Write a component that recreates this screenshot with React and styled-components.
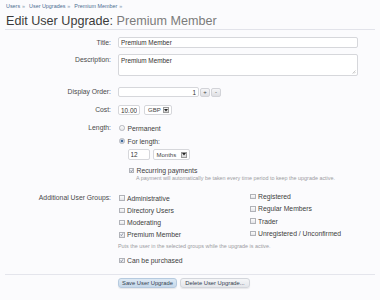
import React from "react";
import styled, { createGlobalStyle } from "styled-components";

const GlobalStyle = createGlobalStyle`
  html, body { margin: 0; padding: 0; background: #fbfbfd; }
  body {
    width: 380px; height: 300px; overflow: hidden;
    font-family: "Liberation Sans", Arial, sans-serif; color: #3a3a3a;
  }
  * { box-sizing: border-box; }
`;

const Page = styled.div`
  padding: 0 5px;
`;

const Breadcrumb = styled.div`
  margin-top: 2px;
  height: 8px;
  line-height: 8px;
  font-size: 5.4px;
  color: #4d6d91;
  padding-left: 1px;
  display: flex;
  gap: 4px;
`;

const Crumb = styled.span`
  &::after { content: "»"; margin-left: 2px; color: #8a9bb0; }
`;

const Heading = styled.h1`
  margin: 4px 0 0;
  padding: 0 0 0 1px;
  line-height: 15px;
  height: 16px;
  font-size: 12.6px;
  font-weight: normal;
  color: #3b3b3b;
  border-bottom: 1px solid #e2e3ea;
`;

const HeadingSub = styled.span`
  color: #7b7b7b;
`;

const Row = styled.div`
  display: grid;
  grid-template-columns: 106px 1fr;
  column-gap: 7px;
  align-items: start;
  margin-top: ${(p) => p.$mt || 0}px;
`;

const Label = styled.div`
  text-align: right;
  font-size: 6.8px;
  line-height: ${(p) => p.$lh || 10}px;
  color: #4a4a4a;
`;

const Controls = styled.div`
  display: flex;
  flex-direction: column;
  align-items: flex-start;
`;

const TextInput = styled.input`
  display: block;
  width: ${(p) => p.$w}px;
  height: ${(p) => p.$h || 10}px;
  margin: 0;
  padding: 0 2px;
  border: 1px solid #d6d7db;
  border-radius: 2px;
  background: #fff;
  font-family: "Liberation Sans", Arial, sans-serif;
  font-size: 6.4px;
  color: #333;
  text-align: ${(p) => (p.$right ? "right" : "left")};
  outline: none;
`;

const AreaWrap = styled.div`
  position: relative;
  width: 240px;
  height: 22px;
`;

const TextArea = styled.textarea`
  display: block;
  width: 240px;
  height: 22px;
  margin: 0;
  padding: 2px 2px;
  border: 1px solid #d6d7db;
  border-radius: 2px;
  background: #fff;
  font-family: "Liberation Sans", Arial, sans-serif;
  font-size: 6.4px;
  line-height: 8px;
  color: #333;
  resize: none;
  outline: none;
`;

const Grip = styled.svg`
  position: absolute;
  right: 2px;
  bottom: 2px;
`;

const Inline = styled.div`
  display: flex;
  align-items: center;
  gap: ${(p) => p.$gap || 0}px;
  margin-top: ${(p) => p.$mt || 0}px;
  margin-left: ${(p) => p.$ml || 0}px;
`;

const SpinButton = styled.span`
  display: flex;
  align-items: center;
  justify-content: center;
  width: 10px;
  height: 9px;
  border: 1px solid #d2d3d8;
  border-radius: 2px;
  background: linear-gradient(#f6f6f8, #dedfe3);
  font-size: 6px;
  color: #444;
`;

const Select = styled.div`
  display: flex;
  align-items: center;
  justify-content: space-between;
  width: ${(p) => p.$w}px;
  height: ${(p) => p.$h || 10}px;
  padding: 0 2px 0 3px;
  border: 1px solid #d6d7db;
  border-radius: 2px;
  background: #fff;
  font-size: 6px;
  color: #444;
`;

const ArrowBox = styled.span`
  display: flex;
  align-items: center;
  justify-content: center;
  width: 6px;
  height: 6px;
  border: 1px solid #9a9a9a;
  background: linear-gradient(#f4f4f4, #d8d8d8);
`;

const Option = styled.label`
  display: flex;
  align-items: center;
  height: ${(p) => p.$h || 10}px;
  margin-top: ${(p) => p.$mt || 0}px;
  font-size: 6.8px;
  color: #3e3e3e;
  white-space: nowrap;
`;

const Radio = styled.span`
  display: inline-block;
  width: 5.5px;
  height: 5.5px;
  margin-left: 1px;
  margin-right: 3px;
  border-radius: 50%;
  border: 1px solid #b4b7be;
  background: ${(p) =>
    p.$checked
      ? "radial-gradient(circle, #3f6a9a 0 1.4px, #cfd9e6 1.6px)"
      : "linear-gradient(#fdfdfd, #e4e5e8)"};
`;

const Box = styled.span`
  display: inline-flex;
  align-items: center;
  justify-content: center;
  width: 5.5px;
  height: 5.5px;
  margin-left: 1px;
  margin-right: 2.5px;
  border: 1px solid #b0b2b8;
  background: linear-gradient(#fdfdfd, #e3e4e8);
`;

const Hint = styled.div`
  font-size: 5.4px;
  line-height: 6px;
  color: #9c9ca2;
  margin-top: ${(p) => p.$mt || 0}px;
  margin-left: ${(p) => p.$ml || 0}px;
  white-space: nowrap;
`;

const Columns = styled.div`
  display: grid;
  grid-template-columns: 131px 1fr;
`;

const Column = styled.div`
  display: flex;
  flex-direction: column;
  gap: 2.3px;
  margin-top: ${(p) => p.$mt || 0}px;
`;

const Divider = styled.div`
  margin-top: ${(p) => p.$mt || 0}px;
  border-top: 1px solid #e4e5ec;
`;

const ButtonBar = styled.div`
  display: flex;
  gap: 3px;
  margin-top: 3.5px;
  padding-left: 113px;
`;

const Button = styled.span`
  display: flex;
  align-items: center;
  justify-content: center;
  height: 10px;
  width: ${(p) => p.$w}px;
  border-radius: 3px;
  border: 1px solid ${(p) => (p.$primary ? "#b6cadf" : "#d3d6dc")};
  background: ${(p) =>
    p.$primary
      ? "linear-gradient(#dde9f4, #c6d8ea)"
      : "linear-gradient(#f5f6f8, #e4e6ea)"};
  font-size: 5.8px;
  color: #33414f;
  box-shadow: 0 1px 1px rgba(0, 0, 0, 0.08);
`;

const Check = () => (
  <svg width="5" height="5" viewBox="0 0 10 10">
    <path d="M1.5 5.2 L4 8 L8.8 1.5" fill="none" stroke="#4a5a78" strokeWidth="1.8" />
  </svg>
);

const Arrow = () => (
  <svg width="4" height="3" viewBox="0 0 8 6">
    <path d="M0 0 H8 L4 5 Z" fill="#222" />
  </svg>
);

const CheckOption = ({ checked, children, mt, h }) => (
  <Option $mt={mt} $h={h}>
    <Box>{checked ? <Check /> : null}</Box>
    {children}
  </Option>
);

const RadioOption = ({ checked, children, mt }) => (
  <Option $mt={mt}>
    <Radio $checked={checked} />
    {children}
  </Option>
);

const groupsLeft = [
  ["Administrative", false],
  ["Directory Users", false],
  ["Moderating", false],
  ["Premium Member", true],
];
const groupsRight = [
  ["Registered", false],
  ["Regular Members", false],
  ["Trader", false],
  ["Unregistered / Unconfirmed", false],
];

export default function App() {
  return (
    <>
      <GlobalStyle />
      <Page>
        <Breadcrumb>
          <Crumb>Users</Crumb>
          <Crumb>User Upgrades</Crumb>
          <Crumb>Premium Member</Crumb>
        </Breadcrumb>
        <Heading>
          Edit User Upgrade: <HeadingSub>Premium Member</HeadingSub>
        </Heading>

        <Row $mt={7}>
          <Label $lh={11}>Title:</Label>
          <TextInput $w={240} $h={11} defaultValue="Premium Member" readOnly />
        </Row>

        <Row $mt={6}>
          <Label $lh={12}>Description:</Label>
          <AreaWrap>
            <TextArea defaultValue="Premium Member" readOnly />
            <Grip width="4" height="4" viewBox="0 0 8 8">
              <path d="M7 1 L1 7 M7 4 L4 7" stroke="#999" strokeWidth="1" />
            </Grip>
          </AreaWrap>
        </Row>

        <Row $mt={11}>
          <Label>Display Order:</Label>
          <Inline $gap={1}>
            <TextInput $w={81} $right defaultValue="1" readOnly />
            <SpinButton>+</SpinButton>
            <SpinButton>-</SpinButton>
          </Inline>
        </Row>

        <Row $mt={8}>
          <Label>Cost:</Label>
          <Inline $gap={4}>
            <TextInput $w={22} defaultValue="10.00" readOnly />
            <Select $w={27.5}>
              GBP
              <ArrowBox>
                <Arrow />
              </ArrowBox>
            </Select>
          </Inline>
        </Row>

        <Row $mt={8}>
          <Label>Length:</Label>
          <Controls>
            <RadioOption>Permanent</RadioOption>
            <RadioOption checked mt={3}>
              For length:
            </RadioOption>
            <Inline $gap={3} $mt={3} $ml={9.5}>
              <TextInput $w={22} $h={11} defaultValue="12" readOnly />
              <Select $w={37} $h={11}>
                Months
                <ArrowBox>
                  <Arrow />
                </ArrowBox>
              </Select>
            </Inline>
            <Inline $mt={6} $ml={9.5}>
              <CheckOption checked h={9}>
                Recurring payments
              </CheckOption>
            </Inline>
            <Hint $ml={18}>
              A payment will automatically be taken every time period to keep the upgrade active.
            </Hint>
          </Controls>
        </Row>

        <Row $mt={12}>
          <Label>Additional User Groups:</Label>
          <Controls>
            <Columns>
              <Column>
                {groupsLeft.map(([name, c]) => (
                  <CheckOption key={name} checked={c}>
                    {name}
                  </CheckOption>
                ))}
              </Column>
              <Column $mt={-1.5}>
                {groupsRight.map(([name, c]) => (
                  <CheckOption key={name} checked={c}>
                    {name}
                  </CheckOption>
                ))}
              </Column>
            </Columns>
            <Hint $mt={3.3}>Puts the user in the selected groups while the upgrade is active.</Hint>
            <Inline $mt={6.5}>
              <CheckOption checked>Can be purchased</CheckOption>
            </Inline>
          </Controls>
        </Row>

        <Divider $mt={8} />
        <ButtonBar>
          <Button $primary $w={59}>
            Save User Upgrade
          </Button>
          <Button $w={70}>Delete User Upgrade...</Button>
        </ButtonBar>
      </Page>
    </>
  );
}
